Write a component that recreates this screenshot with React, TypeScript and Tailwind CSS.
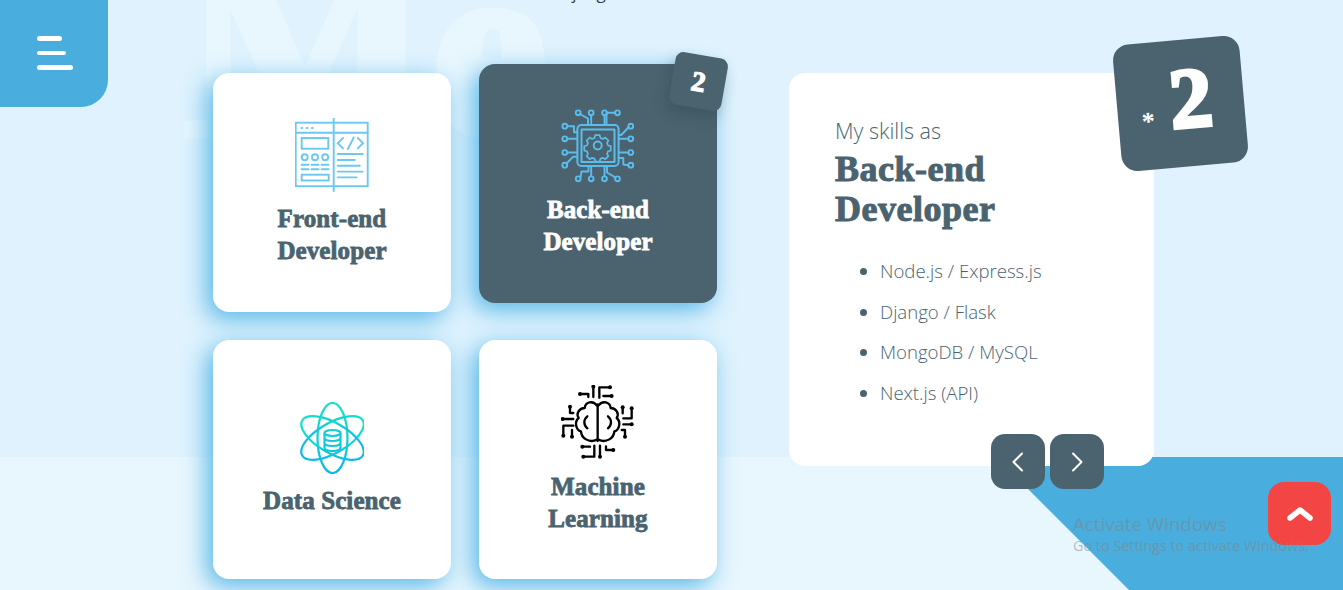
import React from "react";

const serif = "font-['Liberation_Serif',serif] font-bold";

function FrontIcon() {
  return (
    <svg width="74" height="74" viewBox="296 118 74 74" fill="none" stroke="#6ac8f3" strokeWidth="1.9" strokeLinecap="round">
      <rect x="296.7" y="122.7" width="72" height="63.5" />
      <path d="M334.7 118v73M296.7 132.7h72" />
      <path d="M302.5 128h.8M307.7 128h.8M312.9 128h.8" strokeWidth="1.8" />
      <rect x="302.7" y="138" width="26.6" height="10.7" />
      <circle cx="305.7" cy="157.3" r="3" />
      <circle cx="316" cy="157.3" r="3" />
      <circle cx="326.2" cy="157.3" r="3" />
      <path d="M302.5 164.7h7M312.5 164.7h7M322.5 164.7h7M302.5 169.3h7M312.5 169.3h7M322.5 169.3h7" />
      <rect x="302.7" y="174.7" width="27" height="5.8" />
      <path d="M344 138l-5.2 5.2 5.2 5.2M354.8 137.5l-6 11.5M358.8 138l5.2 5.2-5.2 5.2" />
      <path d="M338.7 154h25M338.7 160h17M338.7 165.8h22M338.7 171.6h25M338.7 177.4h19" />
    </svg>
  );
}

function ChipIcon() {
  const d = [
    "M579.5 113.5l8 4.5v6.3", "M590.7 115v9.3", "M604 115v9.3", "M614.5 112.3h-8.5v12",
    "M567 125.7h6.5v6h3", "M567 138.3h9.7", "M567 152h9.7", "M566 163l6.5-6.7h4",
    "M627.8 127l-7 7.5h-2.5", "M627.8 138.3h-9.5", "M627.8 152h-9.5", "M627.8 164.7l-5-.7v-6.5h-4.5",
    "M580 176.5l1-5.5h7v-5", "M590.7 175.7v-9.7", "M604 175.7v-9.7", "M615 177l-8.5-5v-6",
  ];
  const pts = [
    [577.7, 112.3], [590.7, 112.3], [604, 112.3], [617, 112.3],
    [564.3, 125.7], [564.3, 138.3], [564.3, 152], [564.3, 164.7],
    [630.3, 125.7], [630.3, 138.3], [630.3, 152], [630.3, 164.7],
    [577.7, 178.3], [590.7, 178.3], [604, 178.3], [617, 178.3],
  ];
  return (
    <svg width="74" height="74" viewBox="560.5 108.5 74 74" fill="none" stroke="#5cbdec" strokeWidth="1.9" strokeLinecap="round" strokeLinejoin="round">
      <rect x="576.9" y="124.5" width="41.2" height="41" rx="4" strokeWidth="2" />
      <rect x="581" y="129" width="33" height="32.5" strokeWidth="2" />
      {d.map((p) => <path key={p} d={p} />)}
      {pts.map(([x, y]) => <circle key={`${x}-${y}`} cx={x} cy={y} r="2.4" />)}
      <path d="M594.5 133.5h5l.7 3 2.8 1.2 2.7-1.6 3.4 3.5-1.5 2.6 1.1 2.8 3 .7v5l-3 .7-1.1 2.8 1.5 2.6-3.4 3.4-2.7-1.5-2.8 1.1-.7 3h-5l-.7-3-2.8-1.1-2.6 1.5-3.5-3.4 1.6-2.6-1.2-2.8-3-.7v-5l3-.7 1.2-2.8-1.6-2.6 3.5-3.5 2.6 1.6 2.8-1.2z" transform="translate(59.7 14.5) scale(.9)" />
      <circle cx="597.2" cy="145" r="4" />
    </svg>
  );
}

function AtomIcon() {
  return (
    <svg width="64" height="72" viewBox="300 397 64 72" fill="none" stroke="url(#atom)" strokeWidth="2.2">
      <defs>
        <linearGradient id="atom" gradientUnits="userSpaceOnUse" x1="332" y1="400" x2="332" y2="472">
          <stop offset="0" stopColor="#10e2c6" />
          <stop offset="1" stopColor="#10b4ea" />
        </linearGradient>
      </defs>
      <ellipse cx="332.5" cy="433" rx="15" ry="35" />
      <ellipse cx="332.5" cy="433" rx="15" ry="35" transform="rotate(60 332.5 433)" />
      <ellipse cx="332.5" cy="433" rx="15" ry="35" transform="rotate(-60 332.5 433)" />
      <ellipse cx="332.5" cy="428" rx="8" ry="3" />
      <path d="M324.5 428v15c0 1.8 3.5 3 8 3s8-1.2 8-3v-15M324.5 433c0 1.8 3.5 3 8 3s8-1.2 8-3M324.5 438c0 1.8 3.5 3 8 3s8-1.2 8-3" />
    </svg>
  );
}

function BrainIcon() {
  const dots = [[90, 57], [130, 35], [180, 37], [185, 63], [60, 95], [38, 132], [40, 182], [66, 185], [218, 97], [245, 100], [245, 148], [225, 185], [97, 215], [100, 245], [150, 245], [190, 225]];
  return (
    <svg width="75" height="75" viewBox="33 30 225 225" fill="none" stroke="#000" strokeWidth="7" strokeLinecap="round" strokeLinejoin="round">
      <path d="M141 92C128 74 106 82 104 99C88 99 77 116 86 129C72 141 78 165 93 169C94 188 116 206 141 194" />
      <path d="M145 92C158 74 180 82 182 99C198 99 209 116 200 129C214 141 208 165 193 169C192 188 170 206 145 194" />
      <path d="M143 88V198M112 124C100 134 100 150 112 160M174 124C186 134 186 150 174 160" />
      <path d="M90 57H115V66M130 35V66M148 68V37H180M160 63H185" />
      <path d="M60 95V114H70M38 132H70M40 182V152H70M66 185V165" />
      <path d="M218 97V115M245 100V130H220M245 148H220M225 185V165H215" />
      <path d="M97 215H120M100 245H133V212M150 245V212M190 225H168V214" />
      {dots.map(([x, y]) => <circle key={`${x}-${y}`} cx={x} cy={y} r="6" fill="#000" stroke="none" />)}
    </svg>
  );
}

function Card({ title, icon, active }: { title: React.ReactNode; icon: React.ReactNode; active?: boolean }) {
  return (
    <div className={`relative flex h-[239px] w-[238px] flex-col items-center justify-center rounded-[16px] shadow-[-6px_7px_24px_#55b7e8] ${active ? "-translate-y-[9px] bg-[#4a636f] text-white" : "bg-white text-[#4a636f]"}`}>
      {icon}
      <h3 className={`mt-[11px] text-center text-[25px] leading-[32px] tracking-[0.1px] [-webkit-text-stroke:0.8px_currentColor] ${serif}`}>{title}</h3>
      {active && (
        <div className="absolute left-[193px] top-[-9px] flex h-[53px] w-[53px] rotate-[10deg] items-center justify-center rounded-[8px] bg-[#4a636f] shadow-[-2px_8px_14px_rgba(40,60,70,0.3)]">
          <span className={`text-[28px] leading-none text-white [-webkit-text-stroke:1.2px_#fff] ${serif}`}>2</span>
        </div>
      )}
    </div>
  );
}

export default function App() {
  return (
    <div className="relative h-[590px] w-[1343px] overflow-hidden bg-[#dff2fd] font-['Open_Sans',sans-serif] text-[#4a636f]">
      <div className="absolute inset-x-0 bottom-0 h-[133px] bg-[#e8f6fd]" />
      <div className="absolute bottom-0 right-0 h-[133px] w-[347px] bg-[#49aede] [clip-path:polygon(0_0,100%_0,100%_100%,133px_100%)]" />
      <div className="absolute left-[184px] top-[-79px] font-['Liberation_Serif',serif] text-[262px] font-bold leading-[252px] text-[#e8f6fd] [-webkit-text-stroke:8px_#e8f6fd]">Me</div>
      <p className="absolute left-[560px] top-[-17px] text-[17px] leading-[20px] text-[#33444d]">Django</p>

      <div className="relative flex items-start pl-[213px] pt-[73px]">
        <div className="grid grid-cols-[238px_238px] gap-[28px]">
          <Card title={<>Front-end<br />Developer</>} icon={<FrontIcon />} />
          <Card active title={<>Back-end<br />Developer</>} icon={<ChipIcon />} />
          <Card title="Data Science" icon={<AtomIcon />} />
          <Card title={<>Machine<br />Learning</>} icon={<BrainIcon />} />
        </div>

        <div className="relative ml-[72px] h-[393px] w-[365px] rounded-[16px] bg-white pl-[46px] pt-[44px]">
          <p className="text-[21.5px] font-light leading-[28px]">My skills as</p>
          <h2 className={`mt-[4px] text-[36px] leading-[40px] tracking-[0.5px] [-webkit-text-stroke:1px_currentColor] ${serif}`}>Back-end<br />Developer</h2>
          <ul className="mt-[28px] list-disc space-y-[12.7px] pl-[45px] text-[18.6px] font-light leading-[28px]">
            <li>Node.js / Express.js</li>
            <li>Django / Flask</li>
            <li>MongoDB / MySQL</li>
            <li>Next.js (API)</li>
          </ul>

          <div className="absolute left-[328px] top-[-33px] flex h-[127px] w-[127px] -rotate-[5deg] items-center justify-center rounded-[16px] bg-[#4a636f] pr-[8px] text-white">
            <span className={`mr-[16px] mt-[30px] text-[26px] leading-none ${serif}`}>*</span>
            <span className={`-mt-[10px] text-[86px] leading-none [-webkit-text-stroke:3.5px_#fff] ${serif}`}>2</span>
          </div>

          <div className="absolute left-[202px] top-[361px] flex gap-[5px]">
            <button className="flex h-[55px] w-[54px] items-center justify-center rounded-[14px] bg-[#4a636f]">
              <svg width="12" height="20" viewBox="0 0 12 20" fill="none" stroke="#fff" strokeWidth="2" strokeLinecap="round" strokeLinejoin="round"><path d="M10 1.5 1.5 10l8.5 8.5" /></svg>
            </button>
            <button className="flex h-[55px] w-[54px] items-center justify-center rounded-[14px] bg-[#4a636f]">
              <svg width="12" height="20" viewBox="0 0 12 20" fill="none" stroke="#fff" strokeWidth="2" strokeLinecap="round" strokeLinejoin="round"><path d="M2 1.5 10.5 10 2 18.5" /></svg>
            </button>
          </div>
        </div>
      </div>

      <button className="absolute left-0 top-0 flex h-[107px] w-[108px] flex-col items-start gap-[10px] rounded-br-[27px] bg-[#49aede] pl-[37px] pt-[36px]">
        <span className="h-[4.5px] w-[25px] rounded-full bg-white" />
        <span className="h-[4.5px] w-[29px] rounded-full bg-white" />
        <span className="h-[4.5px] w-[36px] rounded-full bg-white" />
      </button>

      <button className="absolute left-[1268px] top-[482px] flex h-[63px] w-[63px] items-center justify-center rounded-[16px] bg-[#f44545]">
        <svg width="26" height="16" viewBox="0 0 26 16" fill="none" stroke="#fff" strokeWidth="5.5" strokeLinecap="round" strokeLinejoin="round"><path d="M3 12 13 4l10 8" /></svg>
      </button>

      <div className="absolute left-[1073px] top-[511px] text-[rgba(128,128,128,0.5)]">
        <div className="text-[18.7px] leading-[25px]">Activate Windows</div>
        <div className="pt-[1px] text-[14.4px] leading-[18px]">Go to Settings to activate Windows.</div>
      </div>
    </div>
  );
}
